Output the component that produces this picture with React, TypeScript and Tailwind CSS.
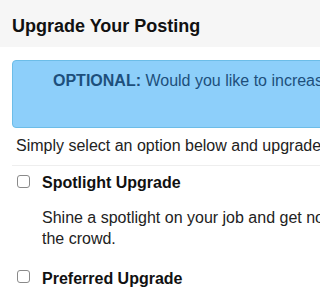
export default function App() {
  return (
    <div className="w-full h-[288px] overflow-hidden bg-white" style={{ fontFamily: '"Liberation Sans", Arial, sans-serif' }}>
      <div className="w-[700px]">
        <div className="h-[47px] bg-[#f6f6f6] flex items-center px-3">
          <h1 className="text-[18px] font-bold text-[#111] leading-[20px] pt-[4px]">Upgrade Your Posting</h1>
        </div>
        <div className="px-3 pt-[13px]">
          <div className="h-[68px] rounded-[4px] border border-[#6cbde8] bg-[#8dcffa] pt-[8px] pl-[40px]">
            <p className="text-[16px] leading-[23px] text-[#1d4f7c] whitespace-nowrap">
              <span className="font-bold">OPTIONAL:</span> Would you like to increase the visibility of your job posting?
            </p>
          </div>
          <p className="text-[16px] leading-[23px] text-[#222] pl-1 mt-[6px] whitespace-nowrap">
            Simply select an option below and upgrade your posting to get more applicants.
          </p>
          <div className="h-px bg-[#eeeeee] mt-[8px]" />
          <div className="pl-[5px] pt-[7px]">
            <label className="flex items-start gap-[12px]">
              <span className="mt-[2px] w-[13px] h-[13px] rounded-[3px] border border-[#8a8a8a] bg-white shrink-0" />
              <span className="text-[16px] leading-[20px] font-bold text-[#111]">Spotlight Upgrade</span>
            </label>
            <p className="pl-[25px] mt-[14px] text-[16px] leading-[21px] text-[#222] w-[380px]">
              Shine a spotlight on your job and get noticed from the crowd.
            </p>
            <label className="flex items-start gap-[12px] mt-[20px]">
              <span className="mt-[1px] w-[13px] h-[13px] rounded-[3px] border border-[#8a8a8a] bg-white shrink-0" />
              <span className="text-[16px] leading-[20px] font-bold text-[#111]">Preferred Upgrade</span>
            </label>
          </div>
        </div>
      </div>
    </div>
  );
}
